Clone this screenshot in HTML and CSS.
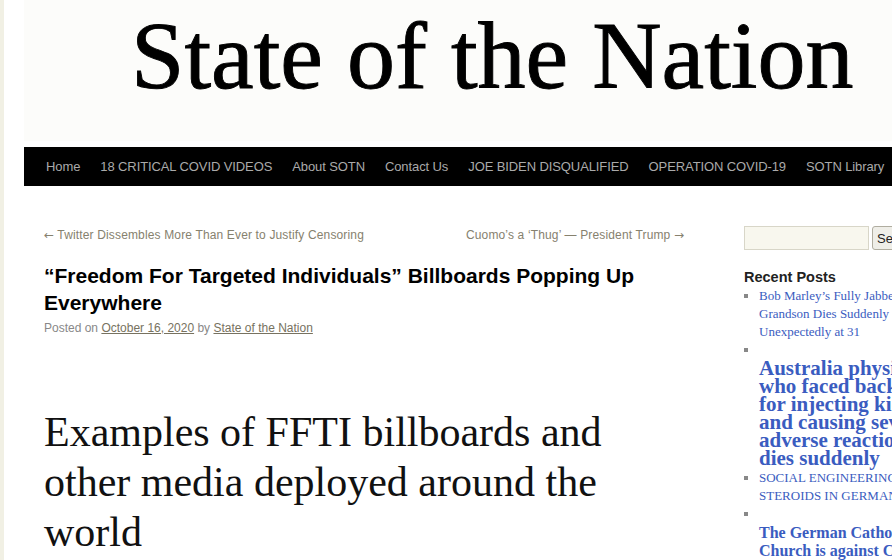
FILE: index.html
```html
<!DOCTYPE html>
<html lang="en">
<head>
<meta charset="utf-8">
<title>“Freedom For Targeted Individuals” Billboards Popping Up Everywhere | State of the Nation</title>
<link rel="stylesheet" href="styles.css">
</head>
<body>
<div class="wrapper">
  <header class="site-header">
    <div class="banner"><span class="banner-title">State of the Nation</span></div>
    <nav class="access">
      <ul class="menu">
        <li><a href="#">Home</a></li>
        <li><a href="#">18 CRITICAL COVID VIDEOS</a></li>
        <li><a href="#">About SOTN</a></li>
        <li><a href="#">Contact Us</a></li>
        <li><a href="#">JOE BIDEN DISQUALIFIED</a></li>
        <li><a href="#">OPERATION COVID-19</a></li>
        <li><a href="#">SOTN Library</a></li>
      </ul>
    </nav>
  </header>
  <div class="main">
    <div class="content">
      <div class="nav-above">
        <a class="nav-prev" href="#"><span class="arrow">←</span> Twitter Dissembles More Than Ever to Justify Censoring</a>
        <a class="nav-next" href="#">Cuomo’s a ‘Thug’ — President Trump <span class="arrow">→</span></a>
      </div>
      <h1 class="entry-title">“Freedom For Targeted Individuals” Billboards Popping Up Everywhere</h1>
      <div class="entry-meta">Posted on <a href="#">October 16, 2020</a> by <a href="#">State of the Nation</a></div>
      <div class="entry-content">
        <h2 class="lead">Examples of FFTI billboards and other media deployed around the world</h2>
      </div>
    </div>
    <aside class="sidebar">
      <form class="search">
        <input class="search-input" type="text">
        <button class="search-btn" type="button">Search</button>
      </form>
      <h3 class="widget-title">Recent Posts</h3>
      <ul class="recent">
        <li><a href="#">Bob Marley’s Fully Jabbed Grandson Dies Suddenly &amp; Unexpectedly at 31</a></li>
        <li><span class="gap">&nbsp;</span><a class="big" href="#">Australia physician who faced backlash for injecting kids and causing severe adverse reactions dies suddenly</a></li>
        <li><a class="caps" href="#">SOCIAL ENGINEERING WITH STEROIDS IN GERMANY</a></li>
        <li><span class="gap">&nbsp;</span><a class="mid" href="#">The German Catholic Church is against COVID vaccine mandates</a></li>
      </ul>
    </aside>
  </div>
</div>
</body>
</html>
```

FILE: styles.css
```css
html, body {
  margin: 0;
  padding: 0;
}
body {
  background: #f1f0e4;
  font-family: "Liberation Sans", Arial, sans-serif;
  overflow: hidden;
}
.wrapper {
  background: #fff;
  margin-left: 4px;
  width: 940px;
  padding: 0 20px;
  height: 560px;
}
.banner {
  height: 141px;
  margin-bottom: 6px;
  background: #fcfcfa;
  padding-left: 107px;
  box-sizing: border-box;
}
.banner-title {
  display: block;
  font-family: "Liberation Serif", "Times New Roman", serif;
  font-size: 96px;
  line-height: 1;
  padding-top: 8px;
  color: #000;
  white-space: nowrap;
  -webkit-text-stroke: 0.9px #000;
}
.access {
  background: #000;
  height: 39px;
}
.menu {
  list-style: none;
  margin: 0 0 0 12px;
  padding: 0;
  display: flex;
  white-space: nowrap;
}
.menu a {
  display: block;
  padding: 0 10px;
  line-height: 39px;
  font-size: 13px;
  color: #aaa;
  text-decoration: none;
  letter-spacing: -0.1px;
}
.main {
  display: flex;
  padding-top: 40px;
}
.content {
  width: 640px;
  margin-left: 20px;
  margin-right: 60px;
}
.nav-above {
  display: flex;
  justify-content: space-between;
  font-size: 12px;
  line-height: 18px;
  margin-bottom: 18px;
  letter-spacing: 0.15px;
}
.nav-above a {
  color: #86816e;
  text-decoration: none;
}
.arrow {
  font-family: "DejaVu Sans", sans-serif;
  font-size: 12px;
  letter-spacing: 0;
}
.entry-title {
  margin: 0;
  font-size: 21px;
  line-height: 27px;
  font-weight: bold;
  color: #000;
}
.entry-meta {
  margin-top: 3px;
  font-size: 12px;
  line-height: 18px;
  color: #888;
}
.entry-meta a {
  color: #777260;
}
.entry-content {
  padding-top: 70px;
}
.lead {
  margin: 0;
  font-family: "Liberation Serif", Georgia, serif;
  font-weight: normal;
  font-size: 42px;
  line-height: 50px;
  color: #111;
}
.sidebar {
  width: 220px;
  flex: none;
}
.search {
  display: flex;
  gap: 3px;
  height: 24px;
  margin: 0 0 18px;
}
.search-input {
  width: 125px;
  height: 24px;
  box-sizing: border-box;
  border: 1px solid #d8d6c8;
  background: #f8f7ee;
  margin: 0;
  padding: 2px;
}
.search-btn {
  height: 24px;
  box-sizing: border-box;
  border: 1px solid #b0ada0;
  border-radius: 3px;
  background: #efeee8;
  font-family: "Liberation Sans", Arial, sans-serif;
  font-size: 13px;
  padding: 0 4px;
  color: #222;
}
.widget-title {
  margin: 0;
  font-size: 14.5px;
  line-height: 18px;
  font-weight: bold;
  color: #222;
}
.recent {
  margin: 1px 0 0;
  padding: 0 0 0 15px;
  width: 184px;
  list-style: square;
  color: #888;
  font-family: "Liberation Serif", Georgia, serif;
  font-size: 13px;
  line-height: 18px;
}
.recent a {
  color: #3a5cc0;
  text-decoration: none;
}
.gap {
  display: block;
  height: 18px;
}
.recent .big {
  display: block;
  font-size: 21px;
  font-weight: bold;
  line-height: 18px;
  padding-bottom: 2px;
}
.recent .mid {
  display: block;
  font-size: 16px;
  font-weight: bold;
  line-height: 18px;
  margin-top: 1px;
}
.recent .caps {
  font-size: 13px;
}
```
